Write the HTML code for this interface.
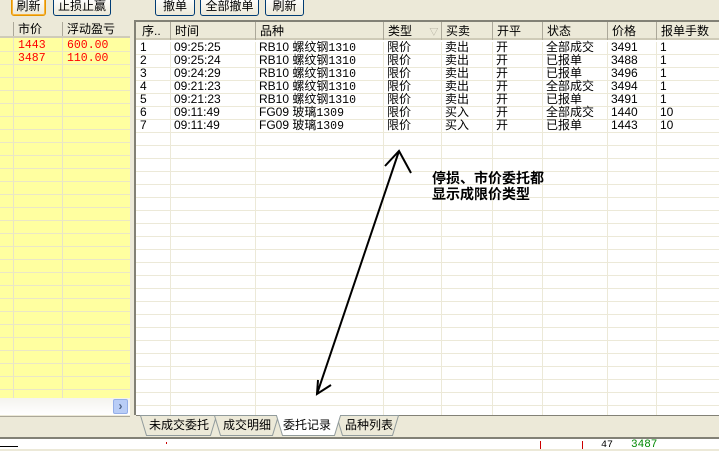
<!DOCTYPE html>
<html><head><meta charset="utf-8"><style>
*{margin:0;padding:0;box-sizing:border-box}
body{width:719px;height:449px;background:#ece9d8;position:relative;overflow:hidden;font-family:"Liberation Sans","Noto Sans CJK SC",sans-serif;font-size:12px;color:#000}
.a{position:absolute;white-space:nowrap}
.btn{position:absolute;top:-3px;height:19px;border:1px solid #003c74;border-radius:3px;background:linear-gradient(#fff,#ece9d8);font-size:12px;line-height:17px;text-align:center}
.m{font-family:"Liberation Mono",monospace;font-size:11.5px}
.hl{position:absolute;height:1px;background:#ece9d8}
.vl{position:absolute;width:1px;background:#ece9d8}
.hd{position:absolute;top:0;height:18px;line-height:18px;padding-left:4px;border-left:1px solid #aca899}
</style></head><body>
<div class="btn" style="left:11px;width:35px;border-color:#e59700;box-shadow:inset 0 0 0 1px #f8b33c">刷新</div>
<div class="btn" style="left:53px;width:58px">止损止赢</div>
<div class="btn" style="left:155px;width:40px">撤单</div>
<div class="btn" style="left:200px;width:59px">全部撤单</div>
<div class="btn" style="left:265px;width:39px">刷新</div>

<!-- left panel -->
<div class="a" style="left:0;top:20px;width:130px;height:378px;background:#ffffa0;overflow:hidden">
<div class="a" style="left:0;top:0;width:130px;height:18px;background:#ece9d8;border-bottom:2px solid #cfcbb8"></div>
<div class="a" style="left:13px;top:2px;width:1px;height:14px;background:#aca899"></div>
<div class="a" style="left:62px;top:2px;width:1px;height:14px;background:#aca899"></div>
<div class="a" style="left:18px;top:0;line-height:18px">市价</div>
<div class="a" style="left:67px;top:0;line-height:18px">浮动盈亏</div>
<div class="a m" style="left:18px;top:19px;color:#f00;line-height:13px">1443</div>
<div class="a m" style="left:67px;top:19px;color:#f00;line-height:13px">600.00</div>
<div class="a m" style="left:18px;top:32px;color:#f00;line-height:13px">3487</div>
<div class="a m" style="left:67px;top:32px;color:#f00;line-height:13px">110.00</div>
<div class="vl" style="left:13px;top:18px;height:360px;background:#e8e4c8"></div>
<div class="vl" style="left:62px;top:18px;height:360px;background:#e8e4c8"></div>
<div id="lrows"></div>
</div>
<div class="a" style="left:0;top:398px;width:130px;height:17px;background:linear-gradient(#f4f3ee,#fff)"></div>
<div class="a" style="left:113px;top:399px;width:15px;height:15px;background:#b9cdf6;border:1px solid #94aee8;border-radius:2px;color:#4d6185;font-size:12px;font-weight:bold;line-height:13px;text-align:center">›</div>
<div class="a" style="left:0;top:416px;width:130px;height:1px;background:#aca899"></div>

<!-- right grid -->
<div class="a" style="left:134px;top:20px;width:585px;height:395px;background:#fff;border-left:2px solid #828176;border-top:2px solid #828176;overflow:hidden">
<div class="a" style="left:0;top:0;width:600px;height:18px;background:#ece9d8;border-bottom:2px solid #cfcbb8">
<div class="hd" style="left:2px;border:0">序..</div>
<div class="hd" style="left:34px">时间</div>
<div class="hd" style="left:119px">品种</div>
<div class="hd" style="left:247px">类型 <span style="color:#aca899;font-size:9px;margin-left:14px">▽</span></div>
<div class="hd" style="left:305px">买卖</div>
<div class="hd" style="left:356px">开平</div>
<div class="hd" style="left:406px">状态</div>
<div class="hd" style="left:471px">价格</div>
<div class="hd" style="left:520px">报单手数</div>
</div>
<div id="grid"></div>
</div>

<!-- annotation -->
<svg class="a" style="left:0;top:0" width="719" height="449">
<g stroke="#000" stroke-width="2" fill="none">
<line x1="399" y1="151" x2="317" y2="394"/>
<polyline points="385,166 399,151 411,173"/>
<polyline points="318,380 317,394 331,385"/>
</g></svg>
<div class="a" style="left:432px;top:170px;font-weight:bold;font-size:14px;line-height:16px">停损、市价委托都<br>显示成限价类型</div>

<!-- tabs -->
<div class="a" style="left:136px;top:415px;width:583px;height:1px;background:#828176"></div>
<svg class="a" style="left:136px;top:415px" width="280" height="22">
<g stroke="#919b9c" stroke-width="1">
<polygon points="4.5,0.5 10.5,20.5 74.5,20.5 80.5,0.5" fill="#ece9d8"/>
<polygon points="78.5,0.5 84.5,20.5 136.5,20.5 142.5,0.5" fill="#ece9d8"/>
<polygon points="200.5,0.5 206.5,20.5 256.5,20.5 262.5,0.5" fill="#ece9d8"/>
<polygon points="140.5,0.5 146.5,20.5 198.5,20.5 204.5,0.5" fill="#fff"/>
</g>
<line x1="141" y1="0.5" x2="204" y2="0.5" stroke="#fff" stroke-width="1"/>
</svg>
<div class="a" style="left:149px;top:417px;line-height:16px">未成交委托</div>
<div class="a" style="left:223px;top:417px;line-height:16px">成交明细</div>
<div class="a" style="left:283px;top:417px;line-height:16px">委托记录</div>
<div class="a" style="left:345px;top:417px;line-height:16px">品种列表</div>

<!-- bottom strip -->
<div class="a" style="left:0;top:437px;width:719px;height:2px;background:#828176"></div>
<div class="a" style="left:0;top:439px;width:719px;height:10px;background:#fff"></div>
<div class="a" style="left:0;top:446px;width:18px;height:1px;background:#000"></div>
<div class="a" style="left:540px;top:441px;width:1px;height:8px;background:#c00"></div>
<div class="a" style="left:582px;top:441px;width:1px;height:8px;background:#c00"></div>
<div class="a" style="left:166px;top:442px;width:1px;height:2px;background:#c00"></div>
<div class="a m" style="left:601px;top:440px;font-size:10px">47</div>
<div class="a m" style="left:631px;top:439px;font-size:11px;color:#080">3487</div>

<script>
var lr=document.getElementById('lrows'),h='';
for(var y=31;y<378;y+=13)h+='<div class="hl" style="left:0;top:'+y+'px;width:130px;background:#ebe7c6"></div>';
lr.outerHTML=h;
var cols=[0,34,119,247,305,356,406,471,520];
var rows=[
['1','09:25:25','RB10 螺纹钢1310','限价','卖出','开','全部成交','3491','1'],
['2','09:25:24','RB10 螺纹钢1310','限价','卖出','开','已报单','3488','1'],
['3','09:24:29','RB10 螺纹钢1310','限价','卖出','开','已报单','3496','1'],
['4','09:21:23','RB10 螺纹钢1310','限价','卖出','开','全部成交','3494','1'],
['5','09:21:23','RB10 螺纹钢1310','限价','卖出','开','已报单','3491','1'],
['6','09:11:49','FG09 玻璃1309','限价','买入','开','全部成交','1440','10'],
['7','09:11:49','FG09 玻璃1309','限价','买入','开','已报单','1443','10']];
var g='';
for(var y=32;y<400;y+=13)g+='<div class="hl" style="left:0;top:'+y+'px;width:600px"></div>';
for(var i=1;i<cols.length;i++)g+='<div class="vl" style="left:'+cols[i]+'px;top:20px;height:380px"></div>';
rows.forEach(function(r,j){r.forEach(function(c,k){
var s=c.replace(/([A-Za-z0-9:.]+)/g,'<span class="m">$1</span>').replace(' ','&nbsp;&nbsp;');
g+='<div class="a" style="left:'+(cols[k]+4)+'px;top:'+(19+j*13)+'px;line-height:13px">'+s+'</div>';});});
document.getElementById('grid').outerHTML=g;
</script>
</body></html>
